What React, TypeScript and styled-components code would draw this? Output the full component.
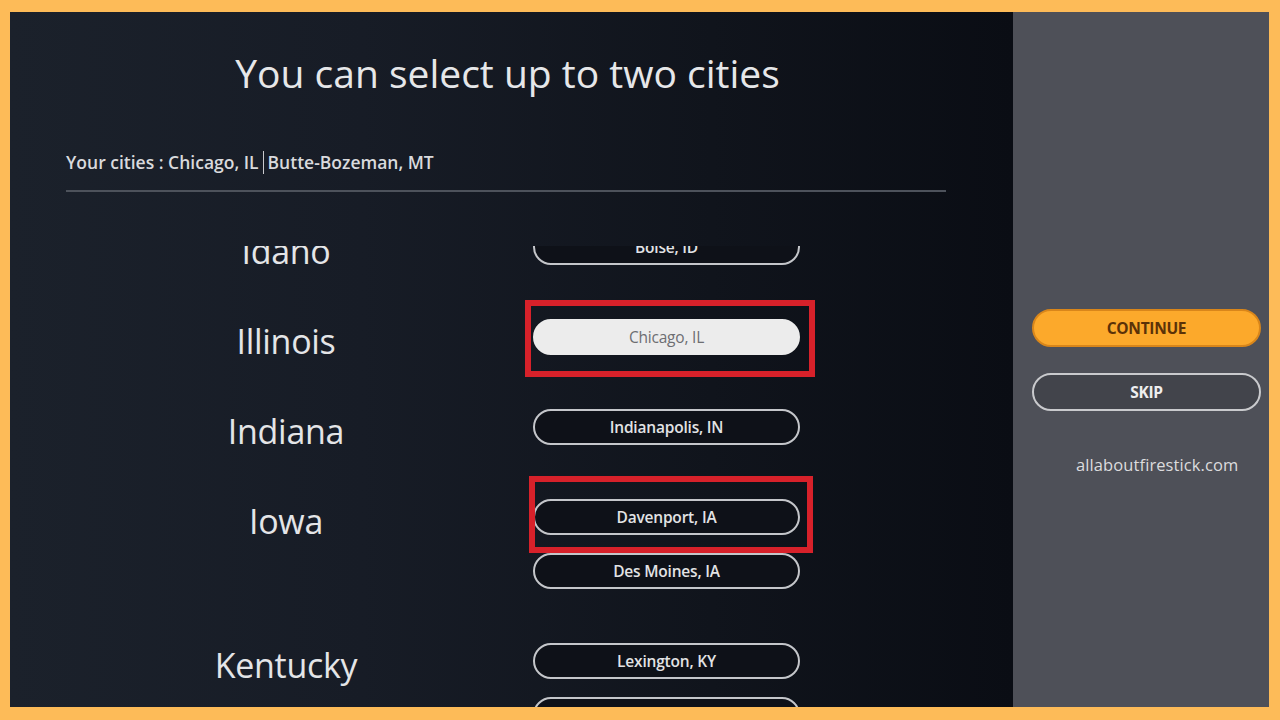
import styled, { createGlobalStyle } from 'styled-components';

const GlobalStyle = createGlobalStyle`
  html, body {
    margin: 0;
    padding: 0;
    background: #fdbb58;
  }
  * { box-sizing: border-box; }
`

const Frame = styled.div`
  width: 1280px;
  height: 720px;
  padding: 12px 11px 13px 10px;
  background: #fdbb58;
  font-family: "Open Sans", "Liberation Sans", sans-serif;
`
const Screen = styled.div`
  display: flex;
  width: 100%;
  height: 100%;
  overflow: hidden;
`
const Main = styled.section`
  width: 1003px;
  display: flex;
  flex-direction: column;
  background: linear-gradient(90deg, #1b212b 0%, #171c26 35%, #10141c 70%, #0a0d14 100%);
  color: #e4e5e7;
`
const Title = styled.h1`
  margin: 39px 0 0;
  padding-right: 8px;
  text-align: center;
  font-weight: 400;
  font-size: 39px;
  line-height: 44px;
  color: #e6e7e9;
`
const Picked = styled.div`
  margin: 55px 0 0 56px;
  display: flex;
  align-items: center;
  font-size: 17.5px;
  font-weight: 600;
  line-height: 24px;
  color: #d9dadd;
  letter-spacing: 0;
`
const Bar = styled.span`
  width: 1px;
  height: 23px;
  margin: 0 4px;
  background: #c9cace;
`
const Divider = styled.hr`
  margin: 16px 0 0 56px;
  width: 880px;
  height: 2px;
  border: 0;
  background: #4d525b;
`
/* the list is scrolled a little, so the top row is half hidden */
const ListViewport = styled.div`
  flex: 1;
  margin-top: 54px;
  overflow: hidden;
`
const List = styled.div`
  margin-top: -17px;
  display: flex;
  flex-direction: column;
  gap: 54px;
`
const StateRow = styled.div`
  display: grid;
  grid-template-columns: 460px 267px;
  column-gap: 17px;
  padding-left: 46px;
  align-items: start;
`
const StateName = styled.div`
  height: 36px;
  text-align: center;
  font-size: 34px;
  font-weight: 400;
  line-height: 45px;
  color: #e4e5e7;
  letter-spacing: -0.3px;
  white-space: nowrap;
`
const Pills = styled.div`
  display: flex;
  flex-direction: column;
  gap: 18px;
`
const PillSlot = styled.div`
  position: relative;
`
const Pill = styled.div<{ $on?: boolean }>`
  height: 36px;
  border-radius: 18px;
  display: flex;
  align-items: center;
  justify-content: center;
  font-size: 15.5px;
  font-weight: ${p => (p.$on ? 400 : 600)};
  color: ${p => (p.$on ? '#6d6e72' : '#e2e3e5')};
  background: ${p => (p.$on ? '#ececec' : '#0e1118')};
  border: 2px solid ${p => (p.$on ? '#ececec' : '#c4c6ca')};
  letter-spacing: -0.2px;
`
const Mark = styled.div<{ $t: number; $r: number; $b: number; $l: number }>`
  position: absolute;
  top: ${p => -p.$t}px;
  right: ${p => -p.$r}px;
  bottom: ${p => -p.$b}px;
  left: ${p => -p.$l}px;
  border: 6px solid #d7212a;
  pointer-events: none;
`
const Side = styled.aside`
  flex: 1;
  background: #4e5058;
  display: flex;
  flex-direction: column;
  padding: 297px 8px 0 19px;
`
const SideButton = styled.button<{ $primary?: boolean }>`
  height: 38px;
  border-radius: 19px;
  font-family: inherit;
  font-size: 15.5px;
  font-weight: 700;
  letter-spacing: -0.3px;
  color: ${p => (p.$primary ? '#5b3208' : '#eeeeef')};
  background: ${p => (p.$primary ? '#fca92b' : '#42444b')};
  border: 2px solid ${p => (p.$primary ? '#d9861a' : '#c9cacd')};
  & + & {
    margin-top: 26px;
  }
`
const Watermark = styled.div`
  margin-top: 43px;
  padding-left: 44px;
  font-family: "Open Sans", "Liberation Sans", sans-serif;
  font-size: 16.5px;
  line-height: 22px;
  color: #dcdcde;
  letter-spacing: 0.1px;
`

type City = { name: string; on?: boolean; mark?: [number, number, number, number] };
type Row = { state: string; cities: City[] };

const rows: Row[] = [
  { state: 'Idaho', cities: [{ name: 'Boise, ID' }] },
  { state: 'Illinois', cities: [{ name: 'Chicago, IL', on: true, mark: [19, 15, 22, 8] }] },
  { state: 'Indiana', cities: [{ name: 'Indianapolis, IN' }] },
  { state: 'Iowa', cities: [{ name: 'Davenport, IA', mark: [23, 13, 18, 4] }, { name: 'Des Moines, IA' }] },
  { state: 'Kentucky', cities: [{ name: 'Lexington, KY' }, { name: 'Louisville, KY' }] },
];

export default function App() {
  return (
    <Frame>
      <GlobalStyle />
      <Screen>
        <Main>
          <Title>You can select up to two cities</Title>
          <Picked>
            Your cities : Chicago, IL<Bar />Butte-Bozeman, MT
          </Picked>
          <Divider />
          <ListViewport>
            <List>
              {rows.map(r => (
                <StateRow key={r.state}>
                  <StateName>{r.state}</StateName>
                  <Pills>
                    {r.cities.map(c => (
                      <PillSlot key={c.name}>
                        <Pill $on={c.on}>{c.name}</Pill>
                        {c.mark && <Mark $t={c.mark[0]} $r={c.mark[1]} $b={c.mark[2]} $l={c.mark[3]} />}
                      </PillSlot>
                    ))}
                  </Pills>
                </StateRow>
              ))}
            </List>
          </ListViewport>
        </Main>
        <Side>
          <SideButton $primary>CONTINUE</SideButton>
          <SideButton>SKIP</SideButton>
          <Watermark>allaboutfirestick.com</Watermark>
        </Side>
      </Screen>
    </Frame>
  );
}
